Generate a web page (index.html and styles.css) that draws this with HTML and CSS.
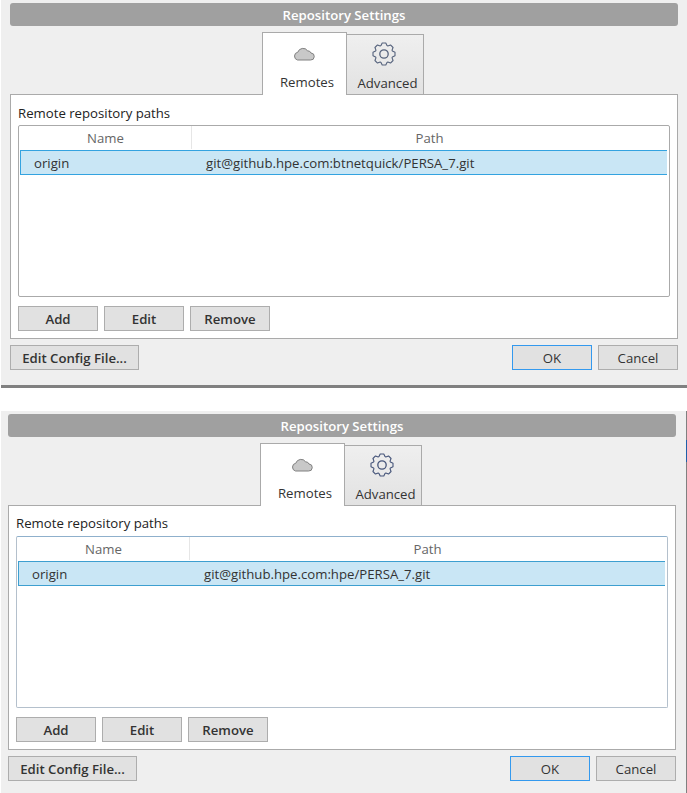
FILE: index.html
```html
<!DOCTYPE html>
<html lang="en">
<head>
<meta charset="utf-8">
<title>Repository Settings</title>
<link rel="stylesheet" href="styles.css">
</head>
<body>
<section class="dialog dialog-first">
  <header class="title">Repository Settings</header>
  <nav class="tabs">
    <div class="tab tab-active">
      <svg class="icon icon-cloud" viewBox="0 0 22 16" width="22" height="16"><path d="M4.5 15H17.5A3.5 3.5 0 0 0 18 8A3.5 3.5 0 0 0 14.6 5.8A5.5 5.5 0 0 0 4.8 7.2A4 4 0 0 0 4.5 15Z" fill="#c8c8c8" stroke="#808080" stroke-width="1"/></svg>
      <span>Remotes</span>
    </div>
    <div class="tab">
      <svg class="icon icon-gear" viewBox="-12 -12 24 24" width="24" height="24"><path d="M3 -8.4L1.8 -11L-1.8 -11L-3 -8.4L-3.82 -8.06L-6.51 -9.05L-9.05 -6.51L-8.06 -3.82L-8.4 -3L-11 -1.8L-11 1.8L-8.4 3L-8.06 3.82L-9.05 6.51L-6.51 9.05L-3.82 8.06L-3 8.4L-1.8 11L1.8 11L3 8.4L3.82 8.06L6.51 9.05L9.05 6.51L8.06 3.82L8.4 3L11 1.8L11 -1.8L8.4 -3L8.06 -3.82L9.05 -6.51L6.51 -9.05L3.82 -8.06Z" fill="none" stroke="#56637d" stroke-width="1.1" stroke-linejoin="round"/><circle cx="0" cy="0" r="4.2" fill="none" stroke="#56637d" stroke-width="1.3"/></svg>
      <span>Advanced</span>
    </div>
  </nav>
  <main class="panel">
    <p class="label">Remote repository paths</p>
    <div class="table">
      <div class="thead"><div class="col-name">Name</div><div class="col-path">Path</div></div>
      <div class="row"><div class="cell-name">origin</div><div class="cell-path">git@github.hpe.com:btnetquick/PERSA_7.git</div></div>
    </div>
    <div class="actions">
      <button class="btn">Add</button><button class="btn">Edit</button><button class="btn">Remove</button>
    </div>
  </main>
  <footer class="footer">
    <button class="btn btn-config">Edit Config File...</button>
    <div class="footer-right"><button class="btn btn-default">OK</button><button class="btn btn-plain">Cancel</button></div>
  </footer>
</section>
<section class="dialog dialog-second">
  <header class="title">Repository Settings</header>
  <nav class="tabs">
    <div class="tab tab-active">
      <svg class="icon icon-cloud" viewBox="0 0 22 16" width="22" height="16"><path d="M4.5 15H17.5A3.5 3.5 0 0 0 18 8A3.5 3.5 0 0 0 14.6 5.8A5.5 5.5 0 0 0 4.8 7.2A4 4 0 0 0 4.5 15Z" fill="#c8c8c8" stroke="#808080" stroke-width="1"/></svg>
      <span>Remotes</span>
    </div>
    <div class="tab">
      <svg class="icon icon-gear" viewBox="-12 -12 24 24" width="24" height="24"><path d="M3 -8.4L1.8 -11L-1.8 -11L-3 -8.4L-3.82 -8.06L-6.51 -9.05L-9.05 -6.51L-8.06 -3.82L-8.4 -3L-11 -1.8L-11 1.8L-8.4 3L-8.06 3.82L-9.05 6.51L-6.51 9.05L-3.82 8.06L-3 8.4L-1.8 11L1.8 11L3 8.4L3.82 8.06L6.51 9.05L9.05 6.51L8.06 3.82L8.4 3L11 1.8L11 -1.8L8.4 -3L8.06 -3.82L9.05 -6.51L6.51 -9.05L3.82 -8.06Z" fill="none" stroke="#46557a" stroke-width="1.1" stroke-linejoin="round"/><circle cx="0" cy="0" r="4.2" fill="none" stroke="#46557a" stroke-width="1.3"/></svg>
      <span>Advanced</span>
    </div>
  </nav>
  <main class="panel">
    <p class="label">Remote repository paths</p>
    <div class="table table-blue">
      <div class="thead"><div class="col-name">Name</div><div class="col-path">Path</div></div>
      <div class="row"><div class="cell-name">origin</div><div class="cell-path">git@github.hpe.com:hpe/PERSA_7.git</div></div>
    </div>
    <div class="actions">
      <button class="btn">Add</button><button class="btn">Edit</button><button class="btn">Remove</button>
    </div>
  </main>
  <footer class="footer">
    <button class="btn btn-config">Edit Config File...</button>
    <div class="footer-right"><button class="btn btn-default">OK</button><button class="btn btn-plain">Cancel</button></div>
  </footer>
</section>
</body>
</html>
```
FILE: styles.css
```css
* { box-sizing: border-box; }
html, body { margin: 0; padding: 0; background: #fff; }
body { width: 687px; height: 793px; overflow: hidden; font-family: "Open Sans", "Noto Sans", sans-serif; font-size: 13.2px; color: #333; }
.dialog { background: #efefef; margin-left: 1px; padding-top: 3px; }
.dialog-first { height: 388px; padding-left: 9px; padding-right: 9px; border-bottom: 3px solid #808080; }
.dialog-second { position: relative; height: 382px; margin-top: 23px; padding-left: 7px; padding-right: 9px; width: 686px; border-right: 1px solid #808080; }
.dialog-second::after { content: ""; position: absolute; top: 29px; right: -1px; width: 1px; height: 22px; background: #1f5fa8; }
.dialog-second .title, .dialog-second .panel, .dialog-second .footer { margin-right: 1px; }
.dialog-second .label { line-height: 18px; }
.title { height: 23px; line-height: 24px; background: #a0a0a0; border-radius: 3px; color: #fff; font-weight: 600; text-align: center; }
.tabs { display: flex; justify-content: center; height: 69px; margin-top: 6px; padding-right: 2px; position: relative; z-index: 1; }
.dialog-second .tabs { padding-right: 3px; }
.tab { width: 78px; height: 61px; margin-top: 2px; margin-left: -1px; border: 1px solid #aaa; background: linear-gradient(#efefef, #e2e2e2); display: flex; flex-direction: column; align-items: center; padding-top: 7px; }
.tab span { margin-top: auto; line-height: 22px; padding-left: 6px; }
.tab-active { width: 85px; height: 63px; margin-top: 0; background: #fff; border-bottom: 0; padding-bottom: 2px; }
.icon { display: block; flex: none; }
.icon-cloud { margin-top: 5px; }
.icon-gear { margin-right: 2px; }
.panel { height: 245px; margin-top: -7px; background: #fff; border: 1px solid #aaa; padding: 8px 7px 0; }
.label { margin: 0; height: 22px; line-height: 20px; color: #222; }
.table { height: 172px; border: 1px solid #aaa; border-radius: 2px; padding: 0 2px 0 1px; }
.table-blue { border-color: #8fb0cc #b4c0cc #b4c0cc; }
.thead { display: flex; height: 23px; line-height: 25px; color: #666; text-align: center; }
.col-name { width: 172px; border-right: 1px solid #e6e6e6; }
.col-path { flex: 1; }
.row { display: flex; height: 25px; line-height: 25px; margin-top: 1px; background: #c9e6f5; border: 1px solid #33a3e0; border-right: 0; color: #333; }
.table-blue .row { border-color: #3d9fd0; }
.cell-name { width: 185px; padding-left: 13px; }
.cell-path { flex: 1; }
.actions { display: flex; gap: 6px; margin-top: 9px; }
.btn { width: 80px; height: 25px; padding: 2px 0 0; background: #e1e1e1; border: 1px solid #adadad; font: inherit; font-weight: 600; color: #333; line-height: 21px; }
.footer { display: flex; justify-content: space-between; margin-top: 6px; }
.btn-config { width: 129px; }
.footer-right { display: flex; gap: 6px; }
.btn-default { border-color: #3399ee; font-weight: 500; }
.btn-plain { font-weight: 500; }
```
